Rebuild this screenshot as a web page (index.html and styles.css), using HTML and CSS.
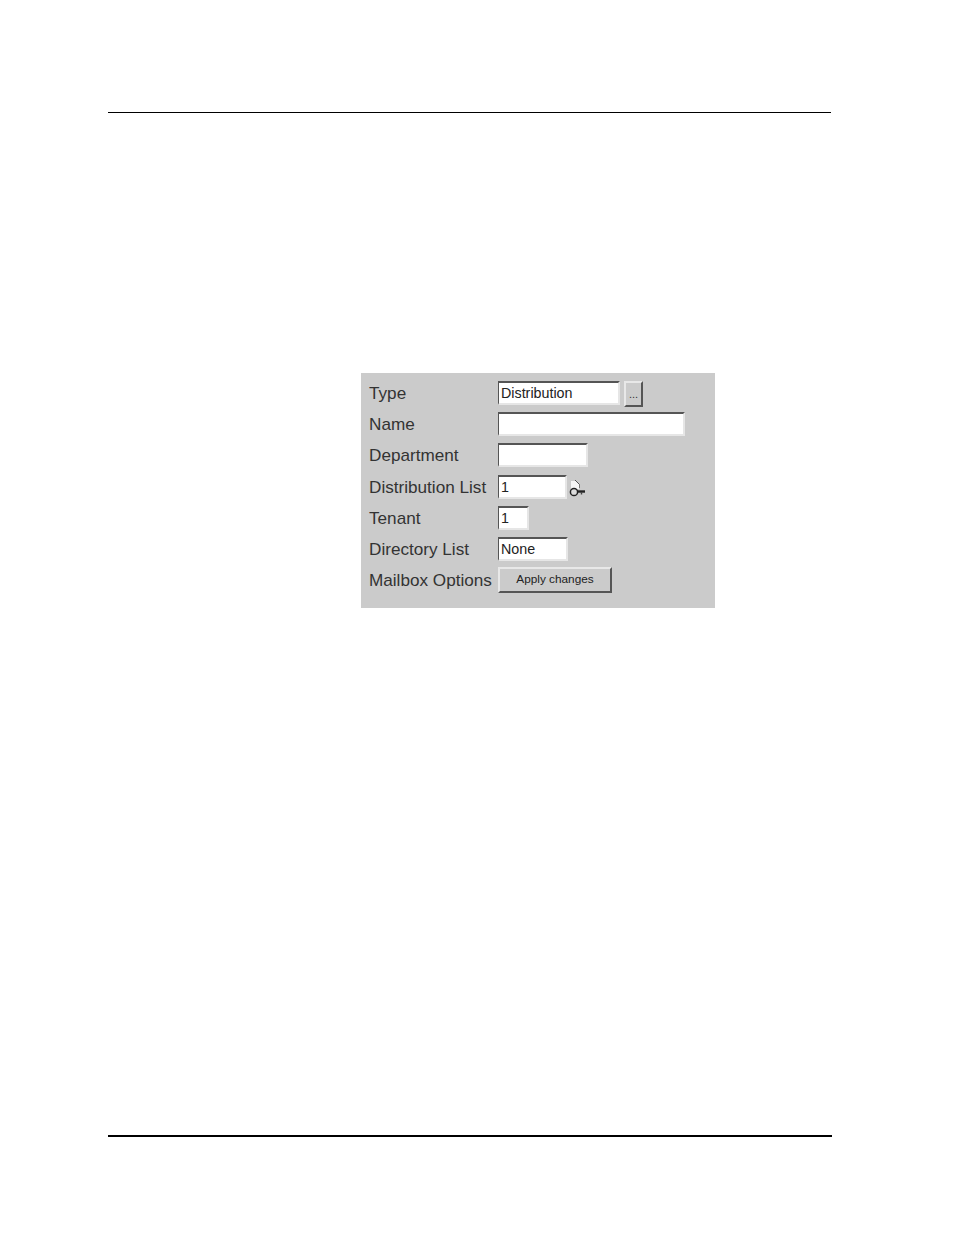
FILE: index.html
```html
<!DOCTYPE html>
<html lang="en">

<head>
    <meta charset="UTF-8">
    <title>Distribution List</title>
    <link rel="stylesheet" href="styles.css">
</head>

<body>
    <div class="page">
        <hr class="rule-top">
        <form class="panel">
            <label class="label">Type</label>
            <div class="field">
                <span class="input w-type">Distribution</span>
                <span class="btn-more">...</span>
            </div>

            <label class="label">Name</label>
            <div class="field"><span class="input w-name"></span></div>

            <label class="label">Department</label>
            <div class="field"><span class="input w-dept"></span></div>

            <label class="label">Distribution List</label>
            <div class="field">
                <span class="input w-list">1</span>
                <svg class="key-icon" width="18" height="18" viewBox="0 0 18 18">
                    <path d="M3 9V1h5l3 3v5z" fill="#f6f6f6" />
                    <path d="M7 0l4 4" stroke="#555" stroke-width="1" fill="none" />
                    <path d="M11.5 4v4" stroke="#777" stroke-width="1" fill="none" />
                    <circle cx="6" cy="12" r="3.6" fill="#dcdcdc" stroke="#222" stroke-width="1.5" />
                    <path d="M9 11.5h8" stroke="#222" stroke-width="2.4" fill="none" />
                    <path d="M13.5 12v2.5" stroke="#444" stroke-width="1.4" fill="none" />
                </svg>
            </div>

            <label class="label">Tenant</label>
            <div class="field"><span class="input w-tenant">1</span></div>

            <label class="label">Directory List</label>
            <div class="field"><span class="input w-dir">None</span></div>

            <label class="label">Mailbox Options</label>
            <div class="field"><span class="btn-apply">Apply changes</span></div>
        </form>
        <hr class="rule-bottom">
    </div>
</body>

</html>
```

FILE: styles.css
```css
html,
body {
    margin: 0;
    background: #fff;
}

.page {
    width: 724px;
    height: 1235px;
    margin-left: 108px;
    padding-top: 112px;
    box-sizing: border-box;
    font-family: "Liberation Sans", Arial, sans-serif;
    color: #222;
}

.rule-top {
    margin: 0;
    border: none;
    height: 1px;
    width: 723px;
    background: #000;
}

.rule-bottom {
    margin: 527px 0 0;
    border: none;
    height: 2px;
    background: #000;
}

.panel {
    width: 354px;
    height: 235px;
    margin: 260px 0 0 253px;
    padding: 8px 0 0 8px;
    box-sizing: border-box;
    background: #cbcbcb;
    display: grid;
    grid-template-columns: 129px 1fr;
    grid-auto-rows: 31.2px;
}

.label {
    font-size: 17.15px;
    line-height: 24px;
    color: #333;
    white-space: nowrap;
}

.field {
    display: flex;
    align-items: flex-start;
}

.input {
    height: 24px;
    box-sizing: border-box;
    background: #fff;
    border-style: solid;
    border-color: #555 #e6e6e6 #e6e6e6 #555;
    border-width: 2px 2px 2px 1px;
    padding-left: 2px;
    font-size: 14.3px;
    line-height: 20px;
    color: #222;
}

.w-type { width: 122px; }
.w-name { width: 187px; }
.w-dept { width: 90px; }
.w-list { width: 69px; }
.w-tenant { width: 31px; }
.w-dir { width: 70px; }

.btn-more {
    width: 19px;
    height: 26px;
    box-sizing: border-box;
    margin-left: 4px;
    border: 2px solid;
    border-color: #e8e8e8 #555 #555 #e8e8e8;
    font-size: 11px;
    line-height: 22px;
    text-align: center;
    color: #333;
}

.key-icon {
    margin: 5px 0 0 1px;
}

.btn-apply {
    width: 114px;
    height: 26px;
    margin-top: -1px;
    box-sizing: border-box;
    border: 2px solid;
    border-color: #e8e8e8 #555 #555 #e8e8e8;
    font-size: 11.8px;
    line-height: 21px;
    text-align: center;
    color: #222;
}
```
